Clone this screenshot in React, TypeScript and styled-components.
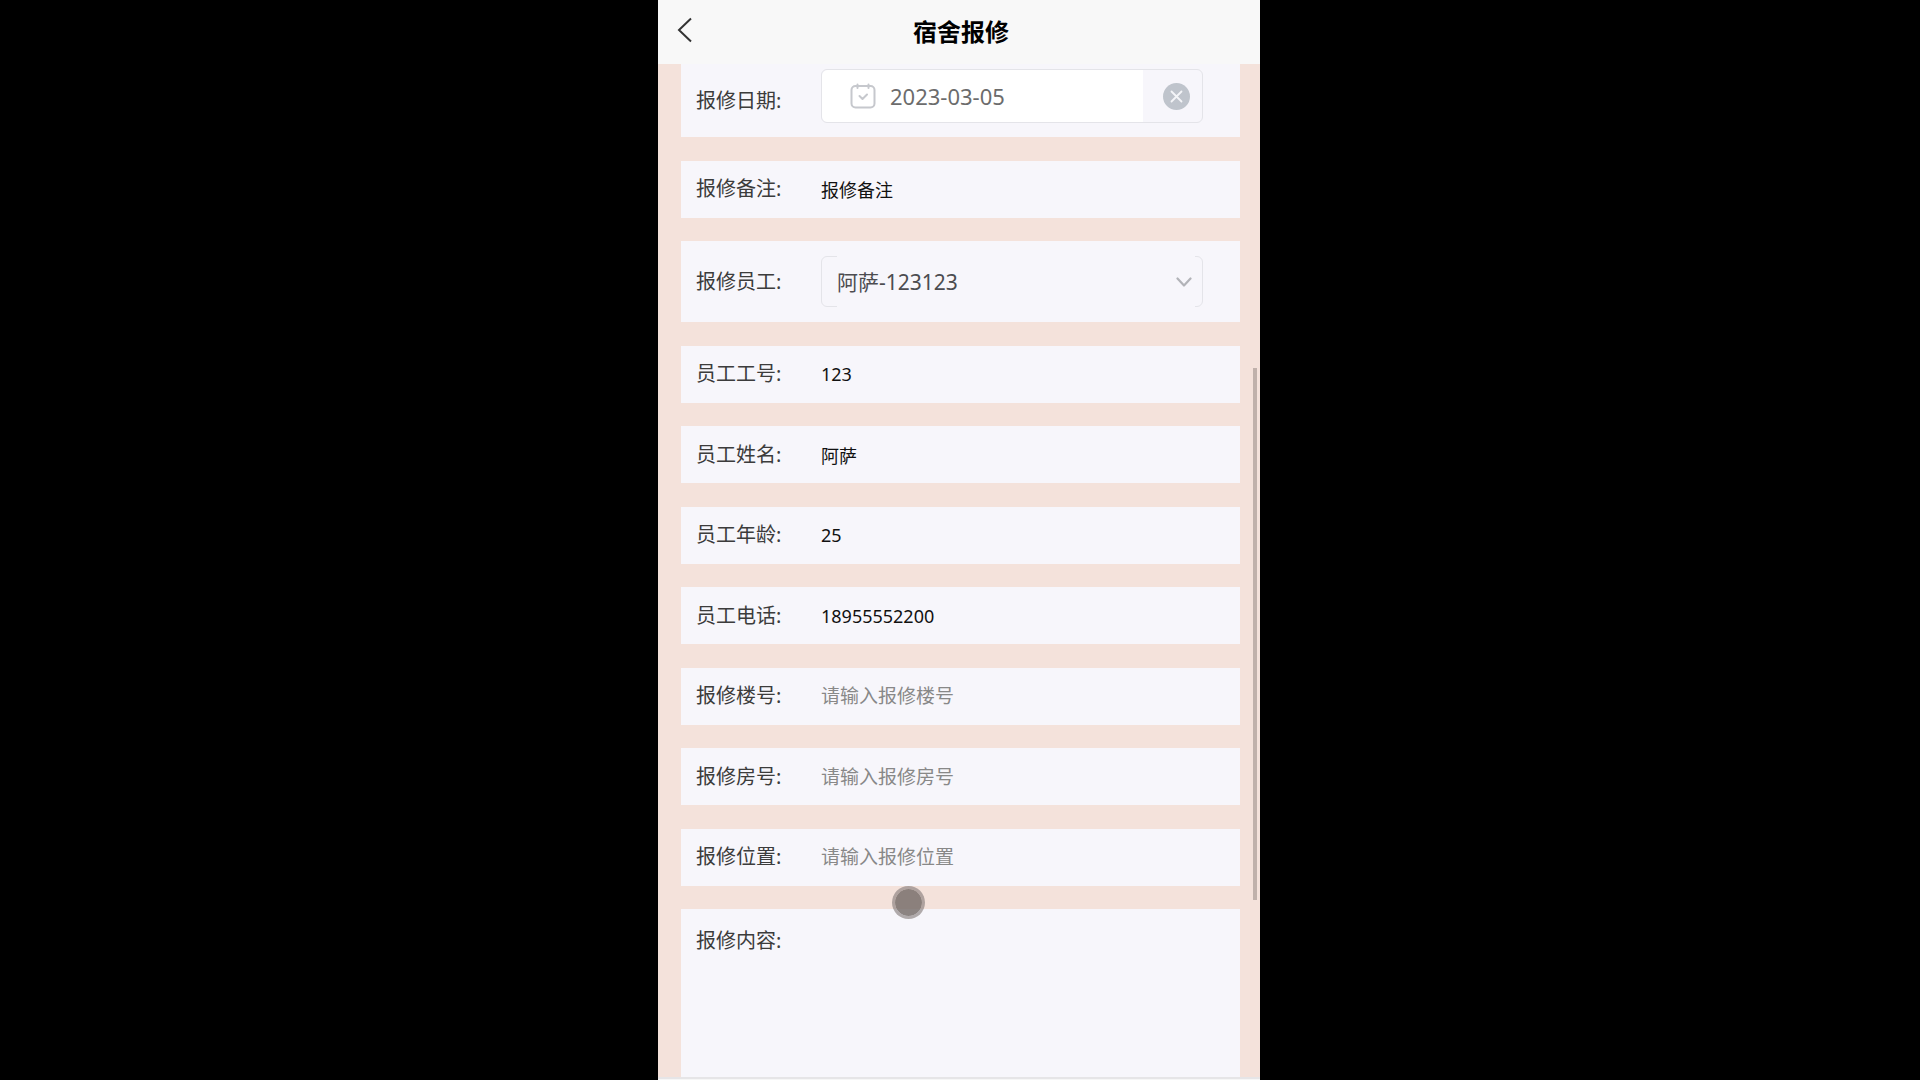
import React, { useState } from 'react';
import styled, { createGlobalStyle } from 'styled-components';

const GlobalStyle = createGlobalStyle`
  * { box-sizing: border-box; }
  body {
    margin: 0;
    background: #000;
    font-family: "Noto Sans", "Noto Sans CJK SC", sans-serif;
    color: #3c3c3c;
  }
  input, select, textarea, button { font-family: inherit; border: 0; outline: 0; }
`;

const Stage = styled.div`
  display: flex;
  justify-content: center;
  height: 100vh;
  padding-right: 2px;
  overflow: hidden;
`;

const Phone = styled.main`
  display: flex;
  flex-direction: column;
  width: 100%;
  max-width: 602px;
  background: #f4e2db;
`;

const Header = styled.header`
  flex: none;
  display: grid;
  grid-template-columns: 54px 1fr 50px;
  align-items: center;
  height: 64px;
  background: #f8f8f8;
`;

const BackButton = styled.button`
  display: flex;
  justify-content: center;
  padding: 0 0 4px;
  background: none;
`;

const Title = styled.h1`
  margin: 0;
  text-align: center;
  font-size: 24px;
  line-height: 32px;
  font-weight: 700;
  color: #000;
`;

const ScrollArea = styled.div`
  position: relative;
  flex: 1;
  min-height: 0;
  overflow: hidden;
`;

const Form = styled.form`
  display: flex;
  flex-direction: column;
  justify-content: space-between;
  height: 100%;
  padding: 0 20px 0 23px;
`;

const Row = styled.div<{ $height?: number; $top?: boolean }>`
  flex: none;
  display: flex;
  align-items: ${p => (p.$top ? 'flex-start' : 'center')};
  height: ${p => p.$height ?? 57}px;
  padding: ${p => (p.$top ? '16px' : '0')} 37px 0 15px;
  background: #f7f6fb;
`;

const Label = styled.label`
  flex: none;
  width: 125px;
  font-size: 20px;
  line-height: 32px;
  white-space: nowrap;
`;

const TextInput = styled.input`
  flex: 1;
  min-width: 0;
  height: 32px;
  padding: 0;
  background: none;
  font-size: 18px;
  color: #111;
  &::placeholder { color: #888; font-size: 19px; opacity: 1; }
`;

const ContentArea = styled.textarea`
  flex: 1;
  height: 120px;
  padding: 0;
  background: none;
  resize: none;
  font-size: 18px;
`;

const FieldBox = styled.div`
  flex: 1;
  display: flex;
  align-items: stretch;
  min-width: 0;
  height: 51px;
  border: 1px solid #e4e4e9;
  border-radius: 6px;
`;

const DateBox = styled(FieldBox)`
  align-self: flex-start;
  height: 54px;
  margin-top: 5px;
`;

const DateValue = styled.div`
  flex: 1;
  display: flex;
  align-items: center;
  gap: 14px;
  min-width: 0;
  padding-left: 28px;
  border-radius: 6px 0 0 6px;
  background: #fff;
`;

const DateInput = styled.input`
  flex: 1;
  min-width: 0;
  padding: 0;
  background: none;
  font-size: 22px;
  color: #6c6c6c;
`;

const ClearButton = styled.button`
  display: flex;
  align-items: center;
  justify-content: flex-end;
  width: 59px;
  padding: 0 12px 0 0;
  background: none;
`;

const SelectShell = styled.div`
  flex: 1;
  display: flex;
  align-items: center;
  min-width: 0;
  margin: -1px 7px -1px 15px;
  padding-right: 3px;
  background: #f7f6fb;
`;

const Select = styled.select`
  flex: 1;
  min-width: 0;
  height: 100%;
  padding: 0;
  appearance: none;
  background: none;
  font-size: 21px;
  color: #4c4c50;
`;

const ScrollThumb = styled.div`
  position: absolute;
  top: 30%;
  right: 3px;
  width: 4px;
  height: 52.5%;
  background: #c0b1ab;
`;

const TouchDot = styled.div`
  position: absolute;
  top: 822px;
  left: 234px;
  width: 33px;
  height: 33px;
  border: 3px solid rgba(128, 120, 118, 0.6);
  border-radius: 50%;
  background: rgba(112, 104, 100, 0.8);
  background-clip: padding-box;
`;

const BottomEdge = styled.footer`
  flex: none;
  height: 3px;
  border-top: 2px solid #e6e5e7;
  background: #f6f6f6;
`;

type Field = { id: string; label: string; value?: string; placeholder?: string };

const fields: Field[] = [
  { id: 'number', label: '员工工号', value: '123' },
  { id: 'name', label: '员工姓名', value: '阿萨' },
  { id: 'age', label: '员工年龄', value: '25' },
  { id: 'phone', label: '员工电话', value: '18955552200' },
  { id: 'building', label: '报修楼号', placeholder: '请输入报修楼号' },
  { id: 'room', label: '报修房号', placeholder: '请输入报修房号' },
  { id: 'place', label: '报修位置', placeholder: '请输入报修位置' },
];

function TextRow({ id, label, value, placeholder }: Field) {
  return (
    <Row>
      <Label htmlFor={id}>{label}:</Label>
      <TextInput id={id} defaultValue={value} placeholder={placeholder} />
    </Row>
  );
}

export default function App() {
  const [date, setDate] = useState('2023-03-05');
  return (
    <Stage>
      <GlobalStyle />
      <Phone>
        <Header>
          <BackButton type="button" aria-label="返回">
            <svg width="16" height="26" viewBox="0 0 16 26" fill="none" stroke="#333" strokeWidth="2">
              <path d="M14 1.5 2 13l12 11.5" />
            </svg>
          </BackButton>
          <Title>宿舍报修</Title>
        </Header>
        <ScrollArea>
          <Form>
            <Row $height={73}>
              <Label htmlFor="date">报修日期:</Label>
              <DateBox>
                <DateValue>
                  <svg width="26" height="26" viewBox="0 0 26 26" fill="none" stroke="#c6c8cd" strokeWidth="2" strokeLinecap="round" strokeLinejoin="round">
                    <rect x="1.5" y="3" width="23" height="21.5" rx="4" />
                    <path d="M7.5 1.5v3.5M18.5 1.5v3.5M9.5 13l3 3 4.5-4.5" />
                  </svg>
                  <DateInput id="date" value={date} onChange={e => setDate(e.target.value)} />
                </DateValue>
                <ClearButton type="button" aria-label="清除" onClick={() => setDate('')}>
                  <svg width="27" height="27" viewBox="0 0 27 27">
                    <circle cx="13.5" cy="13.5" r="13.5" fill="#bfc4cc" />
                    <path d="m8.5 8.5 10 10m0-10-10 10" stroke="#f4f5f8" strokeWidth="1.8" strokeLinecap="round" />
                  </svg>
                </ClearButton>
              </DateBox>
            </Row>
            <TextRow id="remark" label="报修备注" value="报修备注" />
            <Row $height={81}>
              <Label htmlFor="staff">报修员工:</Label>
              <FieldBox>
                <SelectShell>
                  <Select id="staff" defaultValue="1">
                    <option value="1">阿萨-123123</option>
                  </Select>
                  <svg width="16" height="10" viewBox="0 0 16 10" fill="none" stroke="#b2b3b8" strokeWidth="2.2" strokeLinecap="round" strokeLinejoin="round">
                    <path d="m1.5 1.5 6.5 7 6.5-7" />
                  </svg>
                </SelectShell>
              </FieldBox>
            </Row>
            {fields.map(f => (
              <TextRow key={f.id} {...f} />
            ))}
            <Row $height={168} $top>
              <Label htmlFor="content">报修内容:</Label>
              <ContentArea id="content" />
            </Row>
          </Form>
          <ScrollThumb />
          <TouchDot />
        </ScrollArea>
        <BottomEdge />
      </Phone>
    </Stage>
  );
}
